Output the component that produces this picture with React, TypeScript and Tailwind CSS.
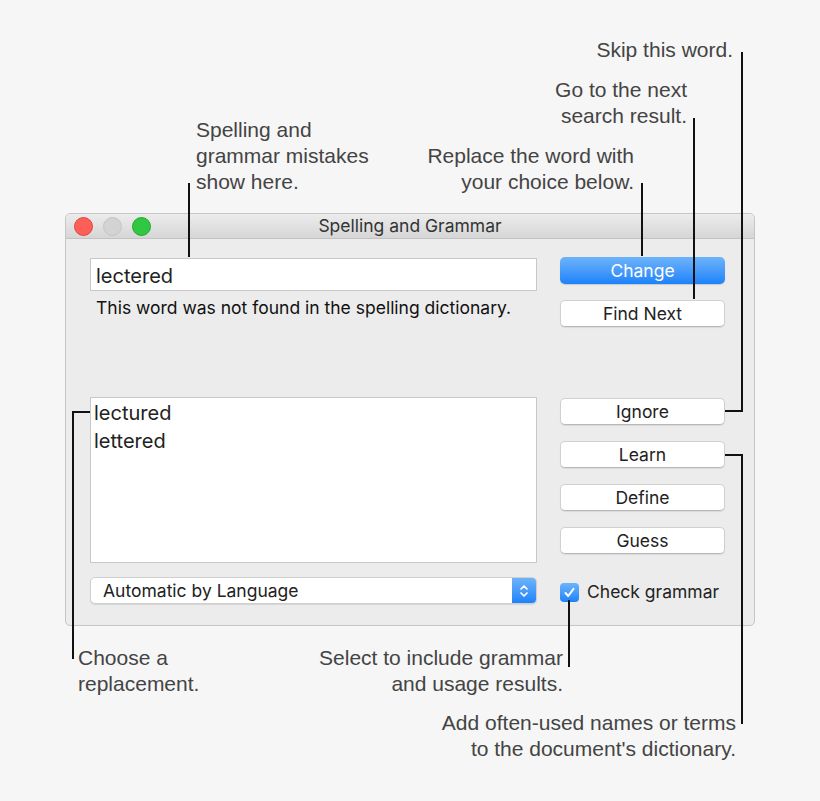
import React from "react";

const ui = { fontFamily: "Inter, 'Liberation Sans', sans-serif" };
const note = { fontFamily: "'Liberation Sans', Arial, sans-serif" };

function PushButton({ label, primary = false }: { label: string; primary?: boolean }) {
  return (
    <div
      className={
        primary
          ? "h-[27px] w-full rounded-[5px] bg-gradient-to-b from-[#6cb3fa] to-[#1a82fb] flex items-center justify-center pt-[2px] text-white text-[17.5px] shadow-[0_1px_1px_rgba(0,0,0,0.15)]"
          : "h-[27px] w-full rounded-[5px] bg-white border border-[#d0d0d0] border-b-[#b8b8b8] flex items-center justify-center pt-[2px] text-[#222] text-[17.5px] shadow-[0_1px_1px_rgba(0,0,0,0.08)]"
      }
      style={ui}
    >
      {label}
    </div>
  );
}

function Line({ className }: { className: string }) {
  return <div className={`absolute bg-[#111] ${className}`} />;
}

export default function App() {
  return (
    <div className="relative w-[820px] h-[801px] bg-[#f6f6f6] pt-[213px] pl-[65px] overflow-hidden">
      {/* Spelling and Grammar panel */}
      <div className="w-[690px] h-[413px] rounded-[5px] border border-[#c6c6c6] bg-[#ececec] flex flex-col overflow-hidden">
        <div className="relative h-[25px] bg-gradient-to-b from-[#ececec] to-[#d6d6d6] border-b border-[#c2c2c2] flex items-center pl-[8px] gap-[10px]">
          <div className="w-[19px] h-[19px] rounded-full bg-[#fc5f57] border border-[#e0443e]" />
          <div className="w-[19px] h-[19px] rounded-full bg-[#d3d3d3] border border-[#c4c4c4]" />
          <div className="w-[19px] h-[19px] rounded-full bg-[#2fc840] border border-[#23a631]" />
          <div className="absolute inset-0 flex items-center justify-center text-[17.5px] text-[#333]" style={ui}>
            Spelling and Grammar
          </div>
        </div>

        <div className="flex flex-1 pl-[24px] pr-[28px] gap-[23px]">
          {/* left column */}
          <div className="w-[447px] flex flex-col">
            <div
              className="mt-[19px] h-[33px] bg-white border border-[#c8c8c8] flex items-center pl-[5px] pt-[3px] text-[20px] text-[#222]"
              style={ui}
            >
              lectered
            </div>
            <div className="mt-[7px] pl-[6px] text-[17.5px] leading-[20px] text-[#111]" style={ui}>
              This word was not found in the spelling dictionary.
            </div>
            <div
              className="mt-[79px] h-[166px] bg-white border border-[#c8c8c8] pl-[3px] pt-[1px] text-[20px] leading-[28px] text-[#222]"
              style={ui}
            >
              <div>lectured</div>
              <div>lettered</div>
            </div>
            <div className="mt-[14px] h-[27px] flex rounded-[5px] bg-white border border-[#cfcfcf] shadow-[0_1px_1px_rgba(0,0,0,0.1)] overflow-hidden">
              <div className="flex-1 flex items-center pl-[12px] pt-[1px] text-[17.5px] text-[#222]" style={ui}>
                Automatic by Language
              </div>
              <div className="w-[24px] bg-gradient-to-b from-[#6cb3fa] to-[#1a82fb] flex items-center justify-center">
                <svg width="10" height="16" viewBox="0 0 10 16" fill="none" stroke="white" strokeWidth="1.7" strokeLinecap="round" strokeLinejoin="round">
                  <path d="M2 6 L5 3 L8 6" />
                  <path d="M2 10 L5 13 L8 10" />
                </svg>
              </div>
            </div>
          </div>

          {/* right column */}
          <div className="w-[165px] flex flex-col">
            <div className="mt-[18px]">
              <PushButton label="Change" primary />
            </div>
            <div className="mt-[16px]">
              <PushButton label="Find Next" />
            </div>
            <div className="mt-[71px] flex flex-col gap-[16px]">
              <PushButton label="Ignore" />
              <PushButton label="Learn" />
              <PushButton label="Define" />
              <PushButton label="Guess" />
            </div>
            <div className="mt-[25px] flex items-center gap-[8px]">
              <div className="w-[19px] h-[19px] rounded-[4px] bg-gradient-to-b from-[#6cb3fa] to-[#1a82fb] flex items-center justify-center">
                <svg width="13" height="13" viewBox="0 0 13 13" fill="none" stroke="white" strokeWidth="2" strokeLinecap="round" strokeLinejoin="round">
                  <path d="M2.5 7 L5.2 10 L10.5 2.8" />
                </svg>
              </div>
              <span className="text-[17.5px] text-[#222]" style={ui}>
                Check grammar
              </span>
            </div>
          </div>
        </div>
      </div>

      {/* callouts */}
      <div className="absolute left-[196px] top-[117px] text-[21px] leading-[26px] text-[#444]" style={note}>
        <div>Spelling and</div>
        <div>grammar mistakes</div>
        <div>show here.</div>
      </div>
      <div className="absolute right-[186px] top-[143px] text-right text-[21px] leading-[26px] text-[#444]" style={note}>
        <div>Replace the word with</div>
        <div>your choice below.</div>
      </div>
      <div className="absolute right-[133px] top-[77px] text-right text-[21px] leading-[26px] text-[#444]" style={note}>
        <div>Go to the next</div>
        <div>search result.</div>
      </div>
      <div className="absolute right-[87px] top-[37px] text-right text-[21px] leading-[26px] text-[#444]" style={note}>
        <div>Skip this word.</div>
      </div>
      <div className="absolute left-[78px] top-[645px] text-[21px] leading-[26px] text-[#444]" style={note}>
        <div>Choose a</div>
        <div>replacement.</div>
      </div>
      <div className="absolute right-[257px] top-[645px] text-right text-[21px] leading-[26px] text-[#444]" style={note}>
        <div>Select to include grammar</div>
        <div>and usage results.</div>
      </div>
      <div className="absolute right-[84px] top-[710px] text-right text-[21px] leading-[26px] text-[#444]" style={note}>
        <div>Add often-used names or terms</div>
        <div>to the document's dictionary.</div>
      </div>

      <Line className="left-[188px] top-[183px] w-[2px] h-[74px]" />
      <Line className="left-[641px] top-[183px] w-[2px] h-[73px]" />
      <Line className="left-[693px] top-[118px] w-[2px] h-[181px]" />
      <Line className="left-[741px] top-[52px] w-[2px] h-[360px]" />
      <Line className="left-[725px] top-[410px] w-[18px] h-[2px]" />
      <Line className="left-[725px] top-[454px] w-[18px] h-[2px]" />
      <Line className="left-[741px] top-[454px] w-[2px] h-[270px]" />
      <Line className="left-[568px] top-[600px] w-[2px] h-[67px]" />
      <Line className="left-[72px] top-[411px] w-[18px] h-[2px]" />
      <Line className="left-[72px] top-[411px] w-[2px] h-[248px]" />
    </div>
  );
}
